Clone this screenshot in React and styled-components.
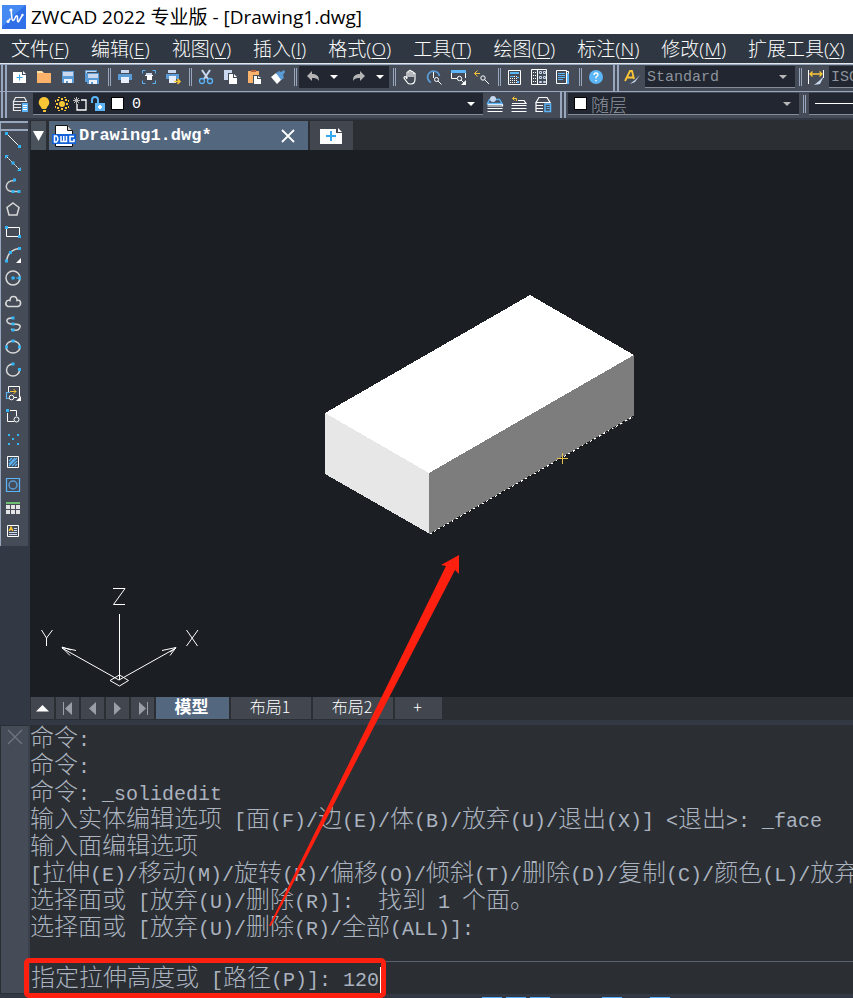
import React from 'react';
import styled, { createGlobalStyle } from 'styled-components';

const blue = '#5bb5f7';
const steel = '#5b9bd5';
const pale = '#c9d8ee';
const gold = '#fbc636';

/* every icon is drawn on an 18 x 18 grid */
const icons = {
  newFile: (
    <>
      <path fill="#fff" d="M2 4h9v3h4v8H2z M12 4h1v1h-1z" />
      <path fill="#fff" d="M12 3l3 3h-3z" />
      <path stroke="#37a9f0" strokeWidth="1" fill="none" d="M5.500 9.500h6M8.500 6.500v6" />
    </>
  ),
  open: (
    <>
      <path fill="#fbe1a8" d="M2 3h5l2 2h-7z" />
      <path fill="#fbb36b" d="M2 5h14v10H2z" />
    </>
  ),
  save: (
    <>
      <path fill={steel} d="M3 3h12v12H3z" />
      <path fill={pale} d="M4 4h10v4H4z" />
      <path fill="#eef3fb" d="M5 11h8v4H5z" />
      <path fill={steel} d="M7 13h2v2H7z" />
    </>
  ),
  saveAll: (
    <>
      <path fill={steel} d="M2 2h12v12H2z" />
      <path fill={pale} d="M3 3h10v2H3z" />
      <path fill="#454c58" d="M4 4h12v1H4z" />
      <path fill={steel} d="M4 5h12v11H4z" />
      <path fill={pale} d="M5 6h10v4H5z" />
      <path fill="#eef3fb" d="M6 12h8v4H6z" />
      <path fill={steel} d="M8 14h2v2H8z" />
    </>
  ),
  print: (
    <>
      <path fill={pale} d="M5 2h8v3H5z" />
      <path fill={steel} d="M2 6h14v6H2z" />
      <path fill="#e8effa" d="M5 9h8v6H5z" />
    </>
  ),
  preview: (
    <>
      <path fill="none" stroke={blue} d="M2.500 5.500v-3h3M12.500 2.500h3v3M15.500 12.500v3h-3M5.500 15.500h-3v-3" />
      <path fill={pale} d="M6 5h6v2H6z" />
      <path fill="#fff" d="M5 7h8v1H5z M7 8h5v4H7z" />
    </>
  ),
  plot: (
    <>
      <path fill={pale} d="M4 2h8v3H4z" />
      <path fill={steel} d="M2 6h13v5H2z" />
      <path fill="#e8effa" d="M5 8h7v7H5z" />
      <path fill="none" stroke={gold} strokeWidth="1.500" d="M10 13.500h6M13.500 11l2.500 2.500-2.500 2.500" />
    </>
  ),
  cut: (
    <>
      <path stroke={pale} strokeWidth="2" d="M5 2l6 9M13 2l-6 9" />
      <circle cx="5" cy="13" r="2.500" fill="none" stroke={blue} strokeWidth="1.300" />
      <circle cx="13" cy="13" r="2.500" fill="none" stroke={blue} strokeWidth="1.300" />
    </>
  ),
  copy: (
    <>
      <path fill={pale} d="M3 2h8v3H7v7H3z" />
      <path fill="#fff" d="M8 6h4v4h4v6H8z M13 6l3 3h-3z" />
    </>
  ),
  paste: (
    <>
      <path fill="#fbb36b" d="M3 3h11v4H8v8H3z" />
      <path fill="#b5623c" d="M6 2h5v2H6z" />
      <path fill="#fff" d="M9 8h3v3h4v5H9z M13 8l3 2h-3z" />
    </>
  ),
  brush: (
    <>
      <path fill="#fff" d="M2 9l5-4 6 6-5 5z" />
      <path fill={steel} d="M7 5l3-2 2 1 3-2 1 2-2 3 1 3-3 2z" />
    </>
  ),
  undo: <path fill="#b4b4b4" d="M3 8l5-5v3c5 0 7 2 7 7-2-3-4-3-7-3v3z" />,
  redo: <path fill="#b4b4b4" d="M15 8l-5-5v3C5 6 3 8 3 13c2-3 4-3 7-3v3z" />,
  hand: (
    <path
      fill="none"
      stroke="#fff"
      strokeWidth="1.200"
      d="M6 10V4.500q1-1.500 2 0V9 3q1-1.500 2 0v6-5q1-1.500 2 0v5-3.500q1-1 2 0V11q0 5-4 5H9q-2 0-3.500-2.500L3 10q0-2 2-1l1 2"
    />
  ),
  zoomTime: (
    <>
      <path fill="none" stroke={steel} strokeWidth="1.700" d="M6 14.500A6 6 0 1 1 14.500 8" />
      <path fill="none" stroke="#fff" d="M8.500 4v6" />
      <circle cx="11.500" cy="11.500" r="2" fill="none" stroke="#fff" />
      <path stroke="#fff" d="M13 13l3.500 3.500" />
    </>
  ),
  zoomWindow: (
    <>
      <path fill={blue} d="M2 2h15v3H2z" />
      <path fill="none" stroke="#fff" d="M2.500 5v5.500H8M16.500 5v5" />
      <circle cx="10.500" cy="10.500" r="2.200" fill="none" stroke="#fff" />
      <path stroke="#fff" d="M12 12l3 3" />
      <path fill="#fff" d="M17 12v5h-5z" />
    </>
  ),
  zoomBack: (
    <>
      <path fill="none" stroke={gold} d="M1.500 5.500H7M4.500 2.500l-3 3 3 3" />
      <circle cx="10" cy="10" r="2.200" fill="none" stroke="#fff" />
      <path stroke="#fff" d="M11.500 11.500L16 16" />
    </>
  ),
  calc: (
    <>
      <path fill="none" stroke="#fff" d="M2.500 2.500h12v14h-12z" />
      <path fill={blue} d="M4 4h9v2H4z" />
      <path stroke="#fff" strokeDasharray="1 1" d="M4 8.500h7M4 10.500h7M4 12.500h7M4 14.500h7" />
      <path fill={blue} d="M11 9h2v1h-2zM11 13h2v2h-2zM4 8h4v1H4z" />
    </>
  ),
  props: (
    <>
      <path fill="none" stroke="#fff" d="M1.500 1.500h15v15h-15zM7.500 1.500v15" />
      <path stroke="#fff" strokeWidth="1" strokeDasharray="1 1" d="M3 4.500h4M3 7.500h4M3 10.500h4M3 13.500h4" />
      <path fill="none" stroke={pale} d="M9.500 3.500h2v2h-2zM13.500 3.500h2v2h-2zM9.500 8.500h2v2h-2zM13.500 8.500h2v2h-2zM9.500 13.500h2v1h-2zM13.500 13.500h2v1h-2z" />
    </>
  ),
  sheet: (
    <>
      <path fill={blue} d="M11 5h4v11h-4z" />
      <path fill="#454c58" stroke="#fff" d="M2.500 2.500h10v13h-10z" />
      <path stroke={blue} d="M4 5.500h7M4 7.500h7M4 9.500h7M4 11.500h5" />
      <path fill="none" stroke="#fff" d="M12.500 3.500h2v2" />
    </>
  ),
  help: (
    <>
      <circle cx="9" cy="9" r="7" fill={blue} />
      <path fill="none" stroke="#fff" strokeWidth="1.300" d="M7 7q0-2 2-2t2 1.800Q11 8 9 9v1.500" />
      <path fill="#fff" d="M8.300 12h1.400v1.300H8.300z" />
    </>
  ),
  textStyle: (
    <>
      <path fill="none" stroke={gold} strokeWidth="1.800" d="M2 13L7 3h2l2 8M4 9.500h6" />
      <path fill={pale} d="M17 7l-5 7-5 2 1-1 4-3z" />
    </>
  ),
  dimStyle: (
    <>
      <path stroke="#fff" d="M1.500 2v14M16.500 2v8" />
      <path fill="none" stroke={gold} strokeWidth="1.300" d="M3 6h12M5.500 3.500L3 6l2.500 2.500M12.500 3.500L15 6l-2.500 2.500" />
      <path fill={pale} d="M17 8l-4 8-6 1 5-4z" />
    </>
  ),
  layers: (
    <>
      <path fill="none" stroke="#e8e8e8" strokeWidth="1.200" d="M2.500 6.500l2-4h9l2 4zM10 9.500H2.500V7M10 12.500H2.500V10M10 15.500H2.500V13" />
      <path fill={blue} d="M11 8h6v9h-6z" />
      <path stroke="#fff" d="M12 10.500h4M12 12.500h4M12 14.500h4" />
    </>
  ),
  layerIso: (
    <>
      <path fill="none" stroke="#fff" strokeWidth="1.200" d="M1.500 9.500h15v1.500h-15M1.500 13.500h15M1.500 16.500h15" />
      <path fill="none" stroke={blue} strokeWidth="1.300" d="M1.500 8.500l2-4h10l2.500 4z" />
      <circle cx="7" cy="4" r="3" fill={pale} />
    </>
  ),
  layerPrev: (
    <>
      <path fill="none" stroke="#fff" strokeWidth="1.200" d="M8 5.500h6l2 3H2M1.500 10.500h15M1.500 13.500h15M1.500 16.500h15" />
      <path fill="none" stroke={gold} d="M6.500 6V3.500h-4M4.500 1.500l-2 2 2 2" />
    </>
  ),
  layerState: (
    <>
      <path fill="none" stroke="#fff" strokeWidth="1.200" d="M2 7.500l3-5h8l3 5zM9 10.500H2V8M9 13.500H2V11M9 16.500H2V14" />
      <path fill="none" stroke={blue} strokeWidth="1.500" d="M11 9h5.500v7.500H11z" />
      <path stroke={blue} d="M12.500 11.500h3M12.500 13.500h3" />
    </>
  ),
  bulb: <path fill={gold} d="M9 2a5.500 5.500 0 0 1 3.500 9.500L11 14H7l-1.500-2.500A5.500 5.500 0 0 1 9 2zM8 15h3v2H8z" />,
  sun: (
    <>
      <circle cx="9" cy="9" r="3" fill={gold} />
      <path fill={gold} d="M8 3h2v2H8zM8 13h2v2H8zM3 8h2v2H3zM13 8h2v2h-2zM4 4h2v2H4zM12 4h2v2h-2zM4 12h2v2H4zM12 12h2v2h-2z" />
      <path fill={gold} d="M5 2h2v1H5zM11 2h2v1h-2zM5 15h2v1H5zM11 15h2v1h-2zM2 5h1v2H2zM15 5h1v2h-1zM2 11h1v2H2zM15 11h1v2h-1z" />
    </>
  ),
  viewport: (
    <>
      <path fill="none" stroke="#fff" strokeWidth="1.300" d="M10 5h5v10H6V9" />
      <path stroke="#bbb" d="M5.500 2v7M2 5.500h7M3 3l5 5M8 3L3 8" />
    </>
  ),
  lock: (
    <>
      <path fill="none" stroke={blue} strokeWidth="2" d="M3 8V5q0-3 3-3t3 3v4" />
      <path fill={blue} d="M6 8h10v8H6z" />
      <path fill="#fff" d="M10 10h2v4h-2zM9 11h4v2H9z" />
    </>
  ),
};

const Dot = ({ x, y }) => <rect x={x - 1.5} y={y - 1.5} width="3" height="3" fill="#33b5f5" />;

const drawTools = [
  ['直线', <><path stroke="#fff" d="M3 3l13 13" /><Dot x={2.500} y={2.500} /><Dot x={15.500} y={15.500} /></>],
  ['构造线', <><path stroke="#fff" strokeDasharray="2 1" d="M3 3l13 13" /><path fill="#33b5f5" d="M1 1h4l-4 4zM17 17h-4l4-4z" /><Dot x={9} y={9} /></>],
  ['多段线', <><path fill="none" stroke="#d0d0d0" strokeWidth="1.500" d="M10.500 3.500C0 3.500 0 14.500 8 14.500h7" /><Dot x={10.500} y={3} /><Dot x={9} y={14.500} /><Dot x={15} y={14.500} /></>],
  ['正多边形', <path fill="none" stroke="#d8d8d8" strokeWidth="1.500" d="M9 3l6 4.500-2 7.500H5L3 7.500z" />],
  ['矩形', <><path fill="none" stroke="#fff" d="M2.500 4.500h13v9h-13z" /><Dot x={2.500} y={4.500} /><Dot x={15.500} y={13.500} /></>],
  ['圆弧', <><path fill="none" stroke="#d8d8d8" strokeWidth="1.500" d="M2.500 15Q4 4 15 2.500" /><Dot x={2.500} y={15} /><Dot x={6.500} y={6.500} /><Dot x={15.500} y={2.500} /><path fill="#fff" d="M17 12v5h-5z" /></>],
  ['圆', <><circle cx="9" cy="9" r="7" fill="none" stroke="#d8d8d8" strokeWidth="1.500" /><path stroke="#33b5f5" d="M9 9h7" strokeDasharray="2 1" /><Dot x={9} y={9} /><Dot x={15.500} y={9} /></>],
  ['修订云线', <path fill="none" stroke="#d8d8d8" strokeWidth="1.600" d="M4 14.500q-3-1-2-4t4-2q0-4 3.500-4t3.500 4q3-1 3.500 2T14 14.500z" />],
  ['样条曲线', <><path fill="none" stroke="#d8d8d8" strokeWidth="1.500" d="M9 3C1 2 1 9 8 9s10 1 7 5c-1 2-7 1-8 0" /><Dot x={9} y={3} /><Dot x={9} y={9} /><Dot x={9} y={15} /></>],
  ['椭圆', <><ellipse cx="9" cy="9" rx="7" ry="6" fill="none" stroke="#d8d8d8" strokeWidth="1.500" /><Dot x={9} y={3} /><Dot x={2.500} y={9} /><Dot x={15.500} y={9} /></>],
  ['椭圆弧', <><path fill="none" stroke="#d8d8d8" strokeWidth="1.500" d="M9 3a6.500 6 0 1 0 6.500 6" /><Dot x={9} y={3} /><Dot x={15.500} y={8.500} /></>],
  ['插入块', <><path fill="none" stroke="#fff" d="M4.500 8V2.500h11V13" /><path fill="none" stroke={blue} strokeWidth="1.200" d="M2.500 15V8.500H6M2.500 14.500H5" /><path fill="none" stroke={gold} d="M6 7.500h6M9.500 5l2.500 2.500-2.500 2.500" /><circle cx="7.500" cy="13.500" r="2.300" fill="none" stroke="#fff" /><path stroke="#fff" d="M10 13.500h3" /><path fill="#fff" d="M17 12v5h-5z" /></>],
  ['创建块', <><path fill="none" stroke="#fff" d="M6 3.500h6.500V9M3.500 6v8.500H10" /><Dot x={3.500} y={3.500} /><circle cx="12.500" cy="12.500" r="2.500" fill="none" stroke="#fff" /></>],
  ['点', <g fill="#33b5f5"><path d="M4 4h2v2H4zM13 4h2v2h-2zM8 8h2v2H8zM4 13h2v2H4zM13 13h2v2h-2z" /></g>],
  ['图案填充', <><path fill="none" stroke="#fff" d="M3.500 3.500h11v11h-11z" /><path stroke={blue} strokeWidth="1.200" d="M5 8l3-3M5 11l6-6M5 13l8-8M8 13l5-5M11 13l2-2" /></>],
  ['面域', <><path fill="none" stroke={blue} strokeWidth="1.200" d="M2.500 2.500h13v13h-13z" /><circle cx="9" cy="9" r="4" fill="none" stroke={steel} strokeWidth="1.500" /></>],
  ['表格', <><path fill="#6fbf73" d="M2 3h14v2H2z" /><path fill="#e4e4e4" d="M2 6h4v4H2zM7 6h4v4H7zM12 6h4v4h-4zM2 11h4v4H2zM7 11h4v4H7zM12 11h4v4h-4z" /></>],
  ['多行文字', <><path fill="none" stroke="#fff" d="M3.500 3.500h11v11h-11z" /><path fill="none" stroke={gold} strokeWidth="1.300" d="M5 9l2-4 2 4M5.500 7.500h3" /><path stroke={pale} d="M10 6.500h3M10 8.500h3M5 10.500h8M5 12.500h8" /></>],
];

const menus = [
  ['文件', 'F'],
  ['编辑', 'E'],
  ['视图', 'V'],
  ['插入', 'I'],
  ['格式', 'O'],
  ['工具', 'T'],
  ['绘图', 'D'],
  ['标注', 'N'],
  ['修改', 'M'],
  ['扩展工具', 'X'],
];

const history = [
  '命令:',
  '命令:',
  '命令: _solidedit',
  '输入实体编辑选项 [面(F)/边(E)/体(B)/放弃(U)/退出(X)] <退出>: _face',
  '输入面编辑选项',
  '[拉伸(E)/移动(M)/旋转(R)/偏移(O)/倾斜(T)/删除(D)/复制(C)/颜色(L)/放弃(U)/退出(X)]',
  '选择面或 [放弃(U)/删除(R)]:  找到 1 个面。',
  '选择面或 [放弃(U)/删除(R)/全部(ALL)]:',
];

function Icon({ name }) {
  return (
    <svg width="18" height="18" viewBox="0 0 18 18" aria-hidden="true">
      {icons[name]}
    </svg>
  );
}

function Tool({ name }) {
  return (
    <ToolButton type="button" aria-label={name}>
      <Icon name={name} />
    </ToolButton>
  );
}

function Combo({ label, value, width, children, bright }) {
  return (
    <ComboBox $width={width}>
      {children}
      <Select aria-label={label} defaultValue={value} $bright={bright}>
        <option>{value}</option>
      </Select>
      <Caret $bright={bright} />
    </ComboBox>
  );
}

/* wide characters take two cells, latin ones take one */
function CommandText({ text }) {
  return text
    .split(/([\u3000-\u9fff]+)/)
    .filter(Boolean)
    .map((part, i) => (/[\u3000-\u9fff]/.test(part) ? <Wide key={i}>{part}</Wide> : <span key={i}>{part}</span>));
}

function Model() {
  return (
    <Drawing width="620" height="300" viewBox="300 280 620 300" aria-label="长方体">
      <g shapeRendering="crispEdges">
        <path fill="#e7e7e7" d="M325 413l105 60v61l-105-60z" />
        <path fill="#7d7d7d" d="M429 473l205-118v62L429 534z" />
        <path fill="#fff" d="M530 295l104 60-205 118-104-60z" />
        <path fill="none" stroke="#111" d="M430 534l204-118" />
        <path fill="none" stroke="#fff" strokeDasharray="2 3" d="M430 534l204-118" />
        <path stroke="#e8c04c" d="M557 458.500h11M562.500 453v11" />
      </g>
    </Drawing>
  );
}

function Axes() {
  return (
    <AxesIcon width="170" height="110" viewBox="35 583 170 110" fill="none" stroke="#fff" aria-label="UCS">
      <path d="M113 588.500h12L113.500 604.500H125M41.500 630l5 8 6-8M46.500 638v8M186.500 630l11 16M198 630l-11.500 16" />
      <path d="M119.500 614v66M119 680L62 648M119 680l57-32" />
      <path d="M76 650.500L62 647.500l8 8M71 650l-9-3M162 650.500l14-3-6 8M170 652l6-4" />
      <path d="M119.500 675l9 5.500-9 5.500-9.500-5.500z" />
    </AxesIcon>
  );
}

export default function App() {
  return (
    <Window>
      <GlobalStyle />
      <TitleBar>
        <svg width="24" height="24" viewBox="0 0 24 24" aria-hidden="true">
          <rect width="24" height="24" fill="#2f6fe8" />
          <path fill="#458af2" d="M0 0h24L12 10 0 22z" />
          <path fill="none" stroke="#fff" strokeWidth="1.500" d="M6 16.500l2.500-3M9 4.500l1 9.500q1 3 2.500 0l1.500-3q1.500-1 1.500 2v3q1 2 2-1l3-5" />
          <circle cx="9" cy="5" r="1.600" fill="#fff" />
          <circle cx="6" cy="16.500" r="1.500" fill="#fff" />
          <circle cx="20.500" cy="10" r="1.200" fill="#fff" />
        </svg>
        <Title>ZWCAD 2022 专业版 - [Drawing1.dwg]</Title>
      </TitleBar>

      <MenuBar>
        {menus.map(([text, key]) => (
          <MenuItem type="button" key={key}>
            {text}(<u>{key}</u>)
          </MenuItem>
        ))}
      </MenuBar>

      <Toolbar $ruled>
        <Grip />
        {['newFile', 'open', 'save', 'saveAll'].map((n) => <Tool key={n} name={n} />)}
        <Separator />
        {['print', 'preview', 'plot'].map((n) => <Tool key={n} name={n} />)}
        <Separator />
        {['cut', 'copy', 'paste', 'brush'].map((n) => <Tool key={n} name={n} />)}
        <Separator />
        <UndoGroup>
          <Tool name="undo" />
          <Caret $bright />
          <Tool name="redo" />
          <Caret $bright />
        </UndoGroup>
        <Separator />
        {['hand', 'zoomTime', 'zoomWindow', 'zoomBack'].map((n) => <Tool key={n} name={n} />)}
        <Separator />
        {['calc', 'props', 'sheet'].map((n) => <Tool key={n} name={n} />)}
        <Separator />
        <Tool name="help" />
        <Grip $gap />
        <Tool name="textStyle" />
        <Combo label="文字样式" value="Standard" width={150} />
        <Separator />
        <Tool name="dimStyle" />
        <Combo label="标注样式" value="ISO-25" />
      </Toolbar>

      <Toolbar>
        <Grip />
        <Tool name="layers" />
        <Combo label="图层" value="0" width={450} bright>
          <LayerFlags>
            <Icon name="bulb" />
            <Icon name="sun" />
            <Icon name="viewport" />
            <Icon name="lock" />
            <Swatch />
          </LayerFlags>
        </Combo>
        <Tool name="layerIso" />
        <Tool name="layerPrev" />
        <Tool name="layerState" />
        <Grip $gap />
        <ColorCombo>
          <Swatch />
          <Select aria-label="颜色" defaultValue="随层" $cjk>
            <option>随层</option>
          </Select>
          <Caret />
        </ColorCombo>
        <Separator />
        <LineCombo>
          <Line />
        </LineCombo>
      </Toolbar>

      <Workspace>
        <SideColumn>
          <DrawBar>
            {drawTools.map(([label, art]) => (
              <DrawButton type="button" key={label} aria-label={label}>
                <svg width="18" height="18" viewBox="0 0 18 18" aria-hidden="true">{art}</svg>
              </DrawButton>
            ))}
          </DrawBar>
        </SideColumn>
        <Document>
          <FileTabs>
            <TabList type="button" aria-label="图纸列表">
              <svg width="11" height="11" viewBox="0 0 11 11"><path fill="#fff" d="M0 1h11L5.500 11z" /></svg>
            </TabList>
            <FileTab>
              <svg width="24" height="24" viewBox="0 0 24 24" aria-hidden="true">
                <path fill="#fff" stroke="#111" d="M3.500 1.500h12l5 5v16h-17z" />
                <path fill="#ccc" stroke="#111" d="M15.500 1.500v5h5" />
                <path fill="#1260d8" d="M0 10h24v10H0z" />
                <path fill="none" stroke="#fff" strokeWidth="1.500" d="M2.500 12v6h2q3-3 0-6zM9 12v5.500h5.500V12M11.750 12v5M22 12.500h-4v5h4V15" />
              </svg>
              <FileName>Drawing1.dwg*</FileName>
              <CloseButton type="button" aria-label="关闭图纸">
                <svg width="14" height="14" viewBox="0 0 14 14"><path stroke="#fff" strokeWidth="1.800" d="M1 1l12 12M13 1L1 13" /></svg>
              </CloseButton>
            </FileTab>
            <NewTab type="button" aria-label="新建图纸">
              <svg width="22" height="18" viewBox="0 0 22 18">
                <path fill="#fff" d="M0 2h16v4h6v11H0zM18 1l4 4h-4z" />
                <path stroke="#37a9f0" strokeWidth="2" d="M6 9h10M11 4v10" />
              </svg>
            </NewTab>
          </FileTabs>
          <Canvas>
            <Model />
            <Axes />
          </Canvas>
          <LayoutTabs>
            <NavButton type="button" aria-label="布局列表"><svg width="13" height="8" viewBox="0 0 13 8"><path fill="#fff" d="M0 7.500L6.500 1 13 7.500z" /></svg></NavButton>
            <NavButton type="button" aria-label="第一个"><svg width="10" height="13" viewBox="0 0 10 13"><path fill="#9a9ea6" d="M0 0h1v13H0zM9 0v13L2 6.500z" /></svg></NavButton>
            <NavButton type="button" aria-label="上一个"><svg width="7" height="13" viewBox="0 0 7 13"><path fill="#9a9ea6" d="M7 0v13L0 6.500z" /></svg></NavButton>
            <NavButton type="button" aria-label="下一个"><svg width="7" height="13" viewBox="0 0 7 13"><path fill="#9a9ea6" d="M0 0v13l7-6.500z" /></svg></NavButton>
            <NavButton type="button" aria-label="最后一个"><svg width="10" height="13" viewBox="0 0 10 13"><path fill="#9a9ea6" d="M9 0h1v13H9zM1 0v13l7-6.500z" /></svg></NavButton>
            <LayoutTab type="button" $width={73} $active>模型</LayoutTab>
            <LayoutTab type="button" $width={80}>布局1</LayoutTab>
            <LayoutTab type="button" $width={80}>布局2</LayoutTab>
            <LayoutTab type="button" $width={47}>+</LayoutTab>
          </LayoutTabs>
        </Document>
      </Workspace>

      <CommandPanel>
        <CommandSide>
          <CloseButton type="button" aria-label="关闭命令行">
            <svg width="16" height="16" viewBox="0 0 16 16"><path stroke="#717780" strokeWidth="1.200" d="M1 1l14 14M15 1L1 15" /></svg>
          </CloseButton>
        </CommandSide>
        <CommandBody>
          <History>
            {history.map((line, i) => (
              <HistoryLine key={i}><CommandText text={line} /></HistoryLine>
            ))}
          </History>
          <Prompt>
            <label htmlFor="command"><CommandText text="指定拉伸高度或 [路径(P)]: " /></label>
            <CommandInput id="command" defaultValue="120" />
            <Highlight />
          </Prompt>
        </CommandBody>
      </CommandPanel>
      <StatusBar>
        <Mark $gap={482} />
        <Mark $gap={4} />
        <Mark $gap={4} />
        <Mark $gap={52} />
        <Mark $gap={28} />
      </StatusBar>

      <Arrow width="200" height="380" viewBox="265 550 200 380" aria-hidden="true">
        <path fill="#ff2010" d="M459 555l-18 10 5 1L269 926h2L455 570l4 4z" />
      </Arrow>
    </Window>
  );
}

const GlobalStyle = createGlobalStyle`
  * {
    box-sizing: border-box;
  }
  body {
    margin: 0;
    background: #323945;
    font-family: "Noto Sans CJK SC", sans-serif;
  }
  button, input, select {
    margin: 0;
    padding: 0;
    border: 0;
    background: none;
    font: inherit;
    color: inherit;
    outline: none;
  }
  svg {
    display: block;
    flex: none;
  }
`;

const Window = styled.div`
  position: relative;
  display: flex;
  flex-direction: column;
  min-height: 100vh;
  overflow: hidden;
`;

const TitleBar = styled.header`
  display: flex;
  align-items: center;
  gap: 5px;
  height: 34px;
  padding-left: 2px;
  background: #fff;
`;

const Title = styled.h1`
  margin: 0;
  font-family: "Open Sans", "Noto Sans CJK SC", sans-serif;
  font-size: 19px;
  font-weight: 400;
  line-height: 34px;
  white-space: nowrap;
  color: #000;
`;

const MenuBar = styled.nav`
  display: flex;
  gap: 22px;
  height: 30px;
  padding-left: 11px;
  background: #2f3842;
  border-bottom: 1px solid #e3e8ee;
`;

const MenuItem = styled.button`
  flex: none;
  font-family: "Open Sans", "Noto Sans CJK SC", sans-serif;
  font-size: 19px;
  font-weight: 300;
  line-height: 28px;
  white-space: nowrap;
  color: #fff;

  u {
    text-underline-offset: 2px;
    text-decoration-thickness: 1px;
  }
`;

const Toolbar = styled.div`
  display: flex;
  height: ${(props) => (props.$ruled ? '28px' : '26px')};
  padding: 1px 0 3px;
  background: #454c58;
  border: 0 solid #98a7bd;
  border-width: ${(props) => (props.$ruled ? '1px 0' : '0')};
`;

const Grip = styled.span`
  flex: none;
  align-self: stretch;
  width: 6px;
  margin: -1px 1px -3px ${(props) => (props.$gap ? '5px' : '1px')};
  border: 0 solid #98a7bd;
  border-width: 0 2px;
`;

const Separator = styled.span`
  flex: none;
  width: 3px;
  margin: 2px 2px 2px 4px;
  border: 0 solid #98a7bd;
  border-width: 0 1px;
`;

const ToolButton = styled.button`
  display: flex;
  flex: none;
  align-items: center;
  justify-content: center;
  width: 24px;
`;

const UndoGroup = styled.div`
  display: flex;
  flex: none;
  align-items: center;
  width: 90px;
  padding: 0 5px 0 2px;
  gap: 5px;
  background: #212630;
`;

const Caret = styled.span`
  flex: none;
  align-self: center;
  width: 8px;
  height: 4px;
  margin-right: 4px;
  border: 4px solid transparent;
  border-top-color: ${(props) => (props.$bright ? '#fff' : '#b8b8b8')};
  border-bottom: 0;
  pointer-events: none;
`;

const ComboBox = styled.div`
  display: flex;
  flex: ${(props) => (props.$width ? 'none' : '1')};
  align-items: center;
  width: ${(props) => (props.$width ? `${props.$width}px` : 'auto')};
  margin-left: 1px;
  padding: 0 4px 0 2px;
  overflow: hidden;
  background: #212630;
  border-bottom: 1px solid #858c97;
`;

const Select = styled.select`
  flex: 1;
  min-width: 60px;
  padding-top: ${(props) => (props.$cjk ? '0' : '2px')};
  appearance: none;
  font-family: ${(props) => (props.$cjk ? '"Noto Sans CJK SC", sans-serif' : '"Liberation Mono", monospace')};
  font-size: ${(props) => (props.$cjk ? '18px' : '15px')};
  font-weight: ${(props) => (props.$cjk ? 300 : 400)};
  line-height: 20px;
  color: ${(props) => (props.$bright ? '#fff' : '#8d939c')};
`;

const LayerFlags = styled.span`
  display: flex;
  flex: none;
  align-items: center;
  margin-right: 4px;
`;

const Swatch = styled.span`
  flex: none;
  width: 11px;
  height: 11px;
  margin: 0 5px;
  background: #fff;
  outline: 1px solid #000;
`;

const ColorCombo = styled(ComboBox)`
  flex: none;
  width: 231px;
`;

const LineCombo = styled(ComboBox)`
  flex: 1;
  padding-left: 6px;
`;

const Line = styled.hr`
  flex: 1;
  height: 1px;
  margin: 0 -4px 0 0;
  border: 0;
  background: #fff;
`;

const Workspace = styled.main`
  display: flex;
  flex: 1;
  padding-top: 2px;
`;

const SideColumn = styled.aside`
  flex: none;
  width: 30px;
`;

const DrawBar = styled.div`
  display: flex;
  flex-direction: column;
  width: 28px;
  margin-top: 1px;
  padding-bottom: 2px;
  background: #454c58;
  border-left: 1px solid #98a7bd;

  &::before {
    content: "";
    height: 6px;
    margin-bottom: -1px;
    border: 0 solid #98a7bd;
    border-width: 2px 0;
  }
`;

const DrawButton = styled.button`
  display: flex;
  align-items: flex-start;
  justify-content: center;
  height: 23px;
  padding: 1px 3px 0 0;
`;

const Document = styled.section`
  display: flex;
  flex: 1;
  flex-direction: column;
  min-width: 0;
`;

const FileTabs = styled.div`
  display: flex;
  height: 30px;
  padding: 1px 0 0 1px;
  background: #2b2e33;
`;

const TabList = styled.button`
  display: flex;
  align-items: center;
  justify-content: center;
  width: 15px;
  margin-right: 3px;
  background: #4a525c;
`;

const FileTab = styled.div`
  display: flex;
  align-items: center;
  width: 259px;
  padding: 0 13px 0 3px;
  background: #53677f;
`;

const FileName = styled.span`
  flex: 1;
  padding-left: 3px;
  font-family: "Liberation Mono", monospace;
  font-size: 17px;
  font-weight: 700;
  color: #fff;
`;

const CloseButton = styled.button`
  display: flex;
`;

const NewTab = styled.button`
  display: flex;
  align-items: center;
  justify-content: center;
  width: 43px;
  margin-left: 2px;
  padding-right: 2px;
  background: #42474f;
`;

const Canvas = styled.div`
  position: relative;
  flex: 1;
  min-height: 547px;
  background: #1b1e23;
`;

const Drawing = styled.svg`
  position: absolute;
  left: 270px;
  top: 130px;
`;

const AxesIcon = styled.svg`
  position: absolute;
  left: 5px;
  bottom: 4px;
`;

const LayoutTabs = styled.div`
  display: flex;
  gap: 2px;
  height: 23px;
  padding: 0 0 1px 1px;
  background: #2b2e33;
`;

const NavButton = styled.button`
  display: flex;
  align-items: center;
  justify-content: center;
  width: 23px;
  background: #42474f;
`;

const LayoutTab = styled.button`
  width: ${(props) => props.$width}px;
  padding: 0 2px 4px 0;
  background: ${(props) => (props.$active ? '#53677f' : '#42474f')};
  font-size: ${(props) => (props.$active ? '17px' : '16px')};
  font-weight: ${(props) => (props.$active ? 700 : 300)};
  line-height: 18px;
  color: #fff;
`;

const CommandPanel = styled.section`
  display: flex;
  margin-top: 5px;
  font-family: "Liberation Mono", monospace;
  font-size: 20px;
  line-height: 27px;
  color: #aab3bf;
  background: #2b2e33;
`;

const CommandSide = styled.div`
  flex: none;
  width: 30px;
  padding: 3px 0 0 6px;
  background: #454c58;
  border: 1px solid #2b2e33;
  border-right: 2px solid #3b424d;
`;

const CommandBody = styled.div`
  flex: 1;
  min-width: 0;
`;

const History = styled.div`
  height: 237px;
  padding-top: 2px;
  border-bottom: 1px solid #59616b;
`;

const HistoryLine = styled.p`
  height: 27px;
  margin: 0;
  white-space: pre;
`;

const Wide = styled.span`
  font-family: "Noto Sans CJK SC", sans-serif;
  font-size: 24px;
  font-weight: 300;
  line-height: 0;
`;

const Prompt = styled.div`
  position: relative;
  display: flex;
  height: 32px;
  padding: 5px 0 0 1px;
  white-space: pre;
`;

const CommandInput = styled.input`
  width: 38px;
  height: 27px;
  border-right: 1px solid #fff;
`;

const Highlight = styled.span`
  position: absolute;
  left: -6px;
  top: -4px;
  width: 362px;
  height: 40px;
  border: 5px solid #ff2010;
  border-radius: 5px;
  pointer-events: none;
`;

const StatusBar = styled.footer`
  display: flex;
  align-items: flex-end;
  height: 4px;
  background: #323945;
`;

const Mark = styled.span`
  width: 20px;
  height: 1px;
  margin-left: ${(props) => props.$gap}px;
  background: #5aaef5;
`;

const Arrow = styled.svg`
  position: absolute;
  left: 265px;
  bottom: 68px;
  pointer-events: none;
`;
